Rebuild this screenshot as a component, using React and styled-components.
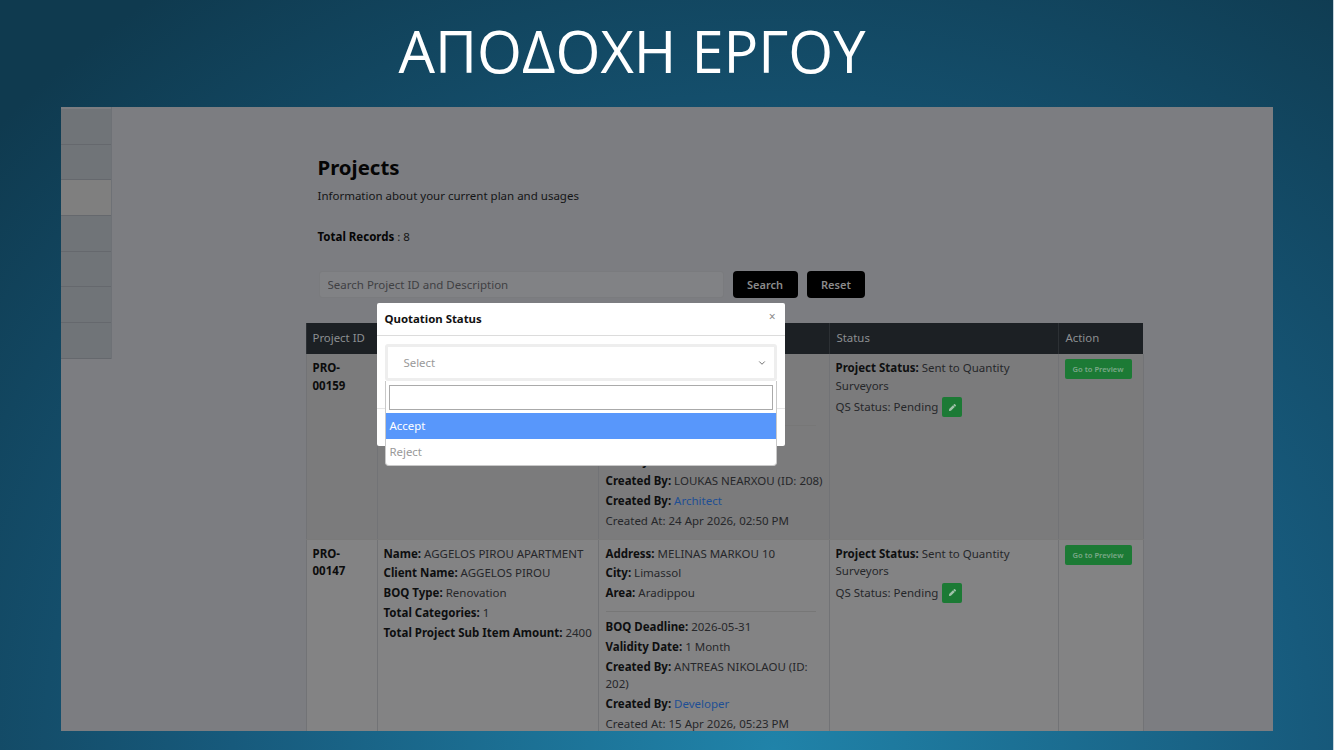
import React from "react";
import styled, { createGlobalStyle } from "styled-components";
import { FaPen } from "react-icons/fa";
import { ChevronDown } from "lucide-react";

const GlobalStyle = createGlobalStyle`
  html, body {
    margin: 0;
    height: 100%;
    background: #c4d3db;
  }
  body {
    font-family: "Noto Sans", "Open Sans", sans-serif;
    overflow: hidden;
  }
  * {
    box-sizing: border-box;
  }
`;

const Slide = styled.div`
  width: 1333px;
  height: 750px;
  display: flex;
  flex-direction: column;
  align-items: center;
  overflow: hidden;
  background: radial-gradient(ellipse 78% 125% at 58% 100%, #2083a9 0%, #175a7c 52%, #0f3a4f 100%);
`;

const Title = styled.h1`
  height: 107px;
  margin: 0;
  padding: 15px 69px 0 0;
  color: #fff;
  font-family: "Open Sans", sans-serif;
  font-size: 57.8px;
  line-height: 72px;
  font-weight: 400;
`;

const Screen = styled.div`
  position: relative;
  width: 1212px;
  height: 624px;
  flex: none;
  display: flex;
  overflow: hidden;
  background: #7c7d81;
  color: #141516;
  font-size: 11.5px;
`;

const Sidebar = styled.ul`
  width: 51px;
  flex: none;
  align-self: flex-start;
  margin: 0;
  padding: 2px 0 0;
  list-style: none;
  border-right: 1px solid #6e7176;
`;

const SideItem = styled.li`
  height: 35.7px;
  background: ${(p) => (p.$active ? "#7f7f7f" : "#707478")};
  border-bottom: 1px solid #65686d;
`;

const Main = styled.main`
  padding: 49px 0 0 194px;
  width: 1038px;
`;

const Intro = styled.div`
  padding-left: 12px;
`;

const Heading = styled.h2`
  margin: 0;
  font-size: 20.4px;
  line-height: 23px;
  font-weight: 700;
  color: #050505;
`;

const Subtitle = styled.p`
  margin: 9px 0 0;
  line-height: 16px;
`;

const Records = styled.p`
  margin: 25px 0 0;
  line-height: 16px;
  b {
    font-weight: 700;
    color: #050505;
  }
`;

const SearchRow = styled.div`
  display: flex;
  gap: 9px;
  margin: 26px 0 25px 13px;
`;

const SearchInput = styled.input`
  width: 405px;
  height: 27px;
  padding: 0 8px;
  border: 1px solid #7a7b7e;
  border-radius: 3px;
  background: #818285;
  font: inherit;
  &::placeholder {
    color: #3f4043;
    opacity: 1;
  }
`;

const DarkButton = styled.button`
  height: 27px;
  padding: 0 14.5px;
  border: 0;
  border-radius: 4px;
  background: #000;
  color: #8b8b8b;
  font: 600 11px "Noto Sans", sans-serif;
`;

const Table = styled.table`
  width: 837px;
  table-layout: fixed;
  border-collapse: collapse;
  line-height: 17.5px;
`;

const HeadCell = styled.th`
  width: ${(p) => p.$w}px;
  height: 31px;
  padding: 0 6px 2px ${(p) => p.$left || 6}px;
  background: #1c2024;
  color: #8c8f92;
  border-left: 1px solid #2c3034;
  text-align: left;
  font-weight: 400;
  font-size: 11.4px;
`;

const Row = styled.tr`
  height: ${(p) => p.$h}px;
  background: ${(p) => p.$bg};
`;

const Cell = styled.td`
  padding: 5px 3px 5px ${(p) => p.$left || 6}px;
  vertical-align: top;
  border-left: 1px solid #727376;
  border-right: 1px solid #727376;
  border-bottom: 1px solid #7a7a7a;
`;

const Id = styled.div`
  max-width: 50px;
  font-weight: 700;
  color: #0c0c0c;
`;

const Line = styled.div`
  margin-bottom: ${(p) => (p.$wide ? "3px" : "2.4px")};
  color: #26272a;
  b {
    font-weight: 700;
    color: #0e0f10;
  }
`;

const Divider = styled.hr`
  margin: 9px 10px 6px 0;
  border: 0;
  border-top: 1px solid #777;
`;

const Role = styled.span`
  color: #1e4f94;
`;

const PreviewButton = styled.button`
  display: block;
  width: 67px;
  height: 20px;
  padding: 0;
  border: 0;
  border-radius: 2px;
  background: #1c7a35;
  color: #7aa888;
  font: 600 7.6px "Noto Sans", sans-serif;
`;

const PencilButton = styled.span`
  display: inline-flex;
  align-items: center;
  justify-content: center;
  width: 20px;
  height: 20px;
  margin-left: 4px;
  margin-bottom: 2px;
  vertical-align: middle;
  border-radius: 2px;
  background: #1c7a35;
  color: #a0c2aa;
`;

const Modal = styled.div`
  position: absolute;
  left: 316px;
  top: 196px;
  width: 408px;
  height: 143px;
  background: #fff;
  border-radius: 2px;
  color: #111;
`;

const ModalHeader = styled.div`
  display: flex;
  justify-content: space-between;
  height: 33px;
  padding: 8px 8px 0;
  border-bottom: 1px solid #dcdcdc;
  font-size: 11.4px;
  line-height: 16px;
  font-weight: 700;
`;

const Close = styled.span`
  margin-top: -2px;
  margin-right: 1px;
  color: #8a8a8a;
  font-weight: 400;
  font-size: 12px;
`;

const ModalBody = styled.div`
  position: relative;
  height: 73px;
  padding: 8px 8px 0;
  border-bottom: 1px solid #e6e6e6;
`;

const SelectBox = styled.div`
  display: flex;
  align-items: center;
  justify-content: space-between;
  height: 37px;
  padding: 0 7px 0 16px;
  border: 3px solid #eee;
  border-radius: 3px;
  color: #999;
  font-size: 11.4px;
`;

const Dropdown = styled.div`
  position: absolute;
  left: 8px;
  top: 45px;
  width: 392px;
  height: 85px;
  padding-top: 4px;
  background: #fff;
  border: 1px solid #c9c9c9;
  border-top: 0;
  border-radius: 0 0 4px 4px;
  font-size: 11.4px;
`;

const DropdownSearch = styled.input`
  display: block;
  width: 384px;
  height: 25px;
  margin: 0 3px 3px;
  border: 1px solid #aaa;
`;

const Option = styled.div`
  height: 26px;
  padding-left: 4px;
  line-height: 26px;
  background: ${(p) => (p.$active ? "#5897fb" : "transparent")};
  color: ${(p) => (p.$active ? "#fff" : "#999")};
`;

const App = () => {
  return (
    <Slide>
      <GlobalStyle />
      <Title>ΑΠΟΔΟΧΗ ΕΡΓΟΥ</Title>
      <Screen>
        <Sidebar>
          {[0, 1, 2, 3, 4, 5, 6].map((i) => (
            <SideItem key={i} $active={i === 2} />
          ))}
        </Sidebar>
        <Main>
          <Intro>
            <Heading>Projects</Heading>
            <Subtitle>Information about your current plan and usages</Subtitle>
            <Records>
              <b>Total Records</b> : 8
            </Records>
          </Intro>
          <SearchRow>
            <SearchInput placeholder="Search Project ID and Description" />
            <DarkButton>Search</DarkButton>
            <DarkButton>Reset</DarkButton>
          </SearchRow>
          <Table>
            <thead>
              <tr>
                <HeadCell $w={71}>Project ID</HeadCell>
                <HeadCell $w={221}>Project</HeadCell>
                <HeadCell $w={231}>Details</HeadCell>
                <HeadCell $w={229} $left={7}>Status</HeadCell>
                <HeadCell $w={85} $left={7}>Action</HeadCell>
              </tr>
            </thead>
            <tbody>
              <Row $h={185} $bg="#7b7b7c">
                <Cell>
                  <Id>PRO-00159</Id>
                </Cell>
                <Cell />
                <Cell $left={7}>
                  <Line>
                    <b>Address:</b>
                  </Line>
                  <Line>
                    <b>City:</b>
                  </Line>
                  <Line>
                    <b>Area:</b>
                  </Line>
                  <Divider />
                  <Line>
                    <b>BOQ Deadline:</b>
                  </Line>
                  <Line>
                    <b>Validity Date:</b>
                  </Line>
                  <Line>
                    <b>Created By:</b> LOUKAS NEARXOU (ID: 208)
                  </Line>
                  <Line>
                    <b>Created By:</b> <Role>Architect</Role>
                  </Line>
                  <Line>Created At: 24 Apr 2026, 02:50 PM</Line>
                </Cell>
                <Cell>
                  <Line $wide>
                    <b>Project Status:</b> Sent to Quantity Surveyors
                  </Line>
                  <Line>
                    QS Status: Pending
                    <PencilButton>
                      <FaPen size={7} />
                    </PencilButton>
                  </Line>
                </Cell>
                <Cell>
                  <PreviewButton>Go to Preview</PreviewButton>
                </Cell>
              </Row>
              <Row $h={200} $bg="#838384">
                <Cell>
                  <Id>PRO-00147</Id>
                </Cell>
                <Cell>
                  <Line>
                    <b>Name:</b> AGGELOS PIROU APARTMENT
                  </Line>
                  <Line>
                    <b>Client Name:</b> AGGELOS PIROU
                  </Line>
                  <Line>
                    <b>BOQ Type:</b> Renovation
                  </Line>
                  <Line>
                    <b>Total Categories:</b> 1
                  </Line>
                  <Line>
                    <b>Total Project Sub Item Amount:</b> 2400
                  </Line>
                </Cell>
                <Cell $left={7}>
                  <Line>
                    <b>Address:</b> MELINAS MARKOU 10
                  </Line>
                  <Line>
                    <b>City:</b> Limassol
                  </Line>
                  <Line>
                    <b>Area:</b> Aradippou
                  </Line>
                  <Divider />
                  <Line>
                    <b>BOQ Deadline:</b> 2026-05-31
                  </Line>
                  <Line>
                    <b>Validity Date:</b> 1 Month
                  </Line>
                  <Line>
                    <b>Created By:</b> ANTREAS NIKOLAOU (ID: 202)
                  </Line>
                  <Line>
                    <b>Created By:</b> <Role>Developer</Role>
                  </Line>
                  <Line>Created At: 15 Apr 2026, 05:23 PM</Line>
                </Cell>
                <Cell>
                  <Line $wide>
                    <b>Project Status:</b> Sent to Quantity Surveyors
                  </Line>
                  <Line>
                    QS Status: Pending
                    <PencilButton>
                      <FaPen size={7} />
                    </PencilButton>
                  </Line>
                </Cell>
                <Cell>
                  <PreviewButton>Go to Preview</PreviewButton>
                </Cell>
              </Row>
            </tbody>
          </Table>
        </Main>
        <Modal>
          <ModalHeader>
            Quotation Status
            <Close>×</Close>
          </ModalHeader>
          <ModalBody>
            <SelectBox>
              Select
              <ChevronDown size={10} color="#555" />
            </SelectBox>
            <Dropdown>
              <DropdownSearch />
              <Option $active>Accept</Option>
              <Option>Reject</Option>
            </Dropdown>
          </ModalBody>
        </Modal>
      </Screen>
    </Slide>
  );
};

export default App;
